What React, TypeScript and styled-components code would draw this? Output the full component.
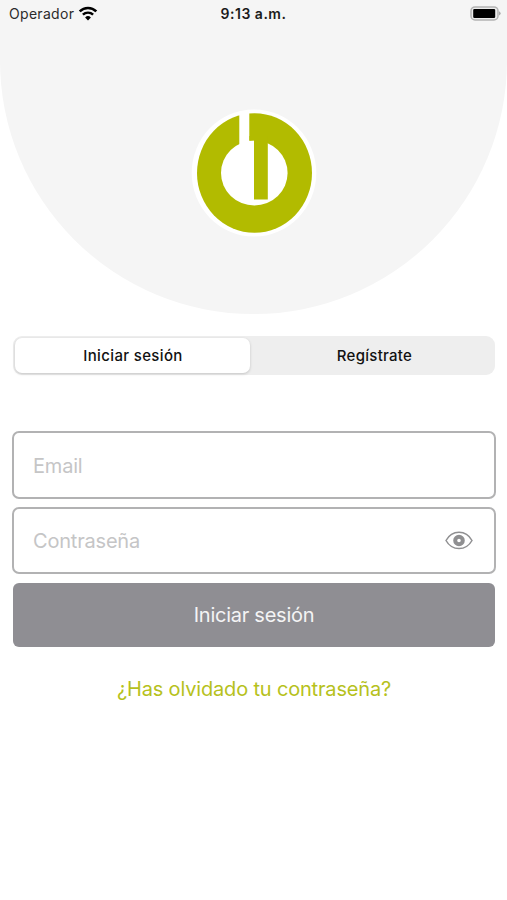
import React from "react";
import styled, { createGlobalStyle } from "styled-components";

const GlobalStyle = createGlobalStyle`
  * { box-sizing: border-box; }
  html, body { margin: 0; background: #fff; }
  body { font-family: Inter, "Liberation Sans", sans-serif; color: #111; }
  button, input { font-family: inherit; }
`;

const Screen = styled.div`
  width: 507px;
  height: 900px;
  overflow: hidden;
  background: #fff;
`;

const Hero = styled.header`
  height: 314px;
  background: #f5f5f5;
  border-radius: 0 0 254px 254px;
  display: flex;
  flex-direction: column;
  align-items: center;
`;

const StatusBar = styled.div`
  width: 100%;
  height: 27px;
  padding: 0 6px 0 9px;
  display: grid;
  grid-template-columns: 1fr auto 1fr;
  align-items: center;
`;

const Carrier = styled.div`
  display: flex;
  align-items: center;
  gap: 4px;
  font-size: 14px;
  letter-spacing: 0.3px;
  color: #2b2b2b;
`;

const Clock = styled.div`
  margin-right: 3px;
  font-size: 14px;
  font-weight: 600;
  letter-spacing: 0.5px;
  color: #1b1b1b;
`;

const Battery = styled.svg`
  justify-self: end;
`;

const Logo = styled.svg`
  margin-top: 81px;
`;

const Form = styled.main`
  padding: 22px 11px 0 12px;
  display: flex;
  flex-direction: column;
`;

const Segments = styled.div`
  display: flex;
  height: 39px;
  margin: 0 1px;
  padding: 2px;
  border-radius: 9px;
  background: #eee;
`;

const Segment = styled.button<{ $active?: boolean }>`
  flex: ${(p) => (p.$active ? "0 0 235px" : "1")};
  border: 0;
  padding: ${(p) => (p.$active ? "0 0 0 1px" : "0 0 0 6px")};
  border-radius: 7px;
  background: ${(p) => (p.$active ? "#fff" : "transparent")};
  box-shadow: ${(p) => (p.$active ? "0 1px 3px rgba(0, 0, 0, 0.18)" : "none")};
  font-size: 15px;
  font-weight: 500;
  letter-spacing: ${(p) => (p.$active ? "0.35px" : "0.28px")};
  color: #111;
`;

const Field = styled.label<{ $height: number }>`
  display: flex;
  align-items: center;
  height: ${(p) => p.$height}px;
  margin-bottom: 8px;
  padding: 0 21px 0 19px;
  border: 2px solid #b2b2b3;
  border-radius: 7px;
`;

const Input = styled.input`
  flex: 1;
  min-width: 0;
  padding: 1px 0 0;
  border: 0;
  outline: 0;
  background: transparent;
  font-size: 20px;
  letter-spacing: -0.2px;
  &::placeholder { color: #c5c5c6; opacity: 1; }
`;

const Fields = styled.div`
  margin-top: 56px;
`;

const Submit = styled.button`
  height: 64px;
  margin: 0.5px 1px 0;
  padding: 1px 0 0;
  border: 0;
  border-radius: 6px;
  background: #8f8e93;
  color: #f4f4f5;
  font-size: 20px;
  letter-spacing: -0.25px;
`;

const ForgotLink = styled.a`
  align-self: center;
  margin-top: 30px;
  font-size: 20px;
  line-height: 24px;
  letter-spacing: -0.17px;
  color: #b6c11c;
`;

export default function App() {
  return (
    <Screen>
      <GlobalStyle />
      <Hero>
        <StatusBar>
          <Carrier>
            Operador
            <svg width="20" height="16" viewBox="0 0 20 16" fill="none" stroke="#000">
              <path d="M1.7 5.4a11.8 11.8 0 0 1 16.6 0" strokeWidth="2.6" />
              <path d="M4.9 8.7a7.2 7.2 0 0 1 10.2 0" strokeWidth="2.4" />
              <path d="M7.1 11.4a4.1 4.1 0 0 1 5.8 0L10 14.4z" fill="#000" stroke="none" />
            </svg>
          </Carrier>
          <Clock>9:13 a.m.</Clock>
          <Battery width="31" height="16" viewBox="0 0 31 16">
            <rect x="1" y="0.9" width="27" height="13" rx="4" fill="#ececec" stroke="#b3b3b3" strokeWidth="1.5" />
            <rect x="3.2" y="2.9" width="22" height="9" rx="1.2" fill="#000" />
            <path d="M29 5.2q3.4 2.2 0 4.4z" fill="#aaa" />
          </Battery>
        </StatusBar>
        <Logo width="127" height="130" viewBox="0 0 127 130">
          <ellipse cx="64" cy="65" rx="62.3" ry="63.5" fill="#fff" />
          <ellipse cx="64.5" cy="65" rx="57.5" ry="59.7" fill="#b2bb00" />
          <ellipse cx="64.3" cy="65" rx="33.3" ry="32.5" fill="#fff" />
          <path d="M49.3 3h10v30h4.5v12H49.3z" fill="#fff" />
          <path d="M59.5 28h18.3v63.5H64V32.3h-4.5z" fill="#b2bb00" />
        </Logo>
      </Hero>
      <Form>
        <Segments>
          <Segment $active>Iniciar sesión</Segment>
          <Segment>Regístrate</Segment>
        </Segments>
        <Fields>
          <Field $height={68}>
            <Input type="email" placeholder="Email" />
          </Field>
          <Field $height={67}>
            <Input type="password" placeholder="Contraseña" />
            <svg width="28" height="20" viewBox="0 0 28 20" fill="none" stroke="#8f8f91">
              <path d="M1 9.5C7-1.5 21-1.5 27 9.5C21 20.2 7 20.2 1 9.5z" strokeWidth="1.5" />
              <circle cx="14" cy="9.5" r="3.8" strokeWidth="4" />
            </svg>
          </Field>
        </Fields>
        <Submit>Iniciar sesión</Submit>
        <ForgotLink>¿Has olvidado tu contraseña?</ForgotLink>
      </Form>
    </Screen>
  );
}
